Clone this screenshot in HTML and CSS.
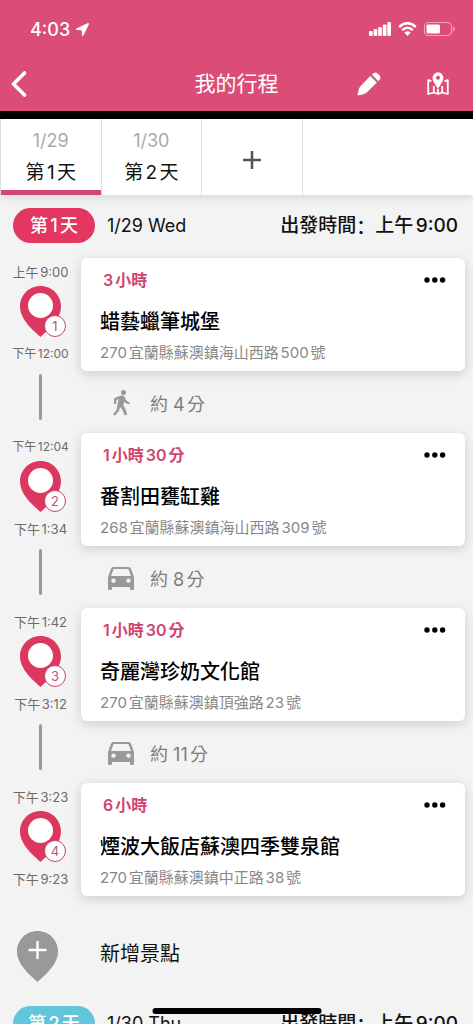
FILE: index.html
```html
<!DOCTYPE html>
<html lang="zh-Hant">
<head>
<meta charset="utf-8">
<meta name="viewport" content="width=device-width, initial-scale=1">
<title>我的行程</title>
<link rel="stylesheet" href="styles.css">
</head>
<body>
<svg class="defs" aria-hidden="true">
  <symbol id="pin" viewBox="0 0 41 51"><path d="M20.500 0C9 0 0 9 0 20.500C0 34 14 45 20.500 51C27 45 41 34 41 20.500C41 9 32 0 20.500 0Z"/></symbol>
  <symbol id="car" viewBox="0 0 26 23"><path fill-rule="evenodd" d="M5.500 0H20.500Q22.300 0 23 1.800L26 10V21.500Q26 23 24.500 23H23.300Q22 23 22 21.500V20H4V21.500Q4 23 2.700 23H1.500Q0 23 0 21.500V10L3 1.800Q3.700 0 5.500 0ZM5.600 2L3 9H23L20.400 2ZM5.500 11.500a2.200 2.200 0 1 0 .01 0ZM20.500 11.500a2.200 2.200 0 1 0 .01 0Z"/></symbol>
  <symbol id="walk" viewBox="0 0 17 26"><circle cx="10.500" cy="2.500" r="2.500"/><path d="M5 6.500L8.800 5.600Q10.800 5.300 11.500 6.900L12.700 9.500Q14 11.700 16.500 12.200V14.300Q13 14 11.200 11.800L10.400 15.200L12.200 18.500L14.200 24.500L11.800 25.500L9.300 19.500L7 17L6 21L1.800 25.800L0 24.200L3.600 19.800L5.600 9L3.300 10.200V14H1V8.600Z"/></symbol>
  <symbol id="dots" viewBox="0 0 22 6"><circle cx="3" cy="3" r="2.700"/><circle cx="10.800" cy="3" r="2.700"/><circle cx="18.600" cy="3" r="2.700"/></symbol>
</svg>
<div class="app">
  <header class="top">
    <div class="status">
      <span class="clock">4:03</span>
      <svg class="locate" viewBox="0 0 13 13"><path d="M12 0L.4 5.400Q-.5 6.600 .7 7L5.700 7.300L6.100 12.300Q6.600 13.400 7.500 12.500L13 1Q13 0 12 0Z"/></svg>
      <svg class="signal" viewBox="0 0 22 14"><rect x="0" y="9" width="3.700" height="5" rx="1"/><rect x="4.600" y="7" width="3.700" height="7" rx="1"/><rect x="9.200" y="5" width="3.700" height="9" rx="1"/><rect x="13.800" y="2.500" width="3.700" height="11.500" rx="1"/><rect x="18.300" y="0" width="3.700" height="14" rx="1"/></svg>
      <svg class="wifi" viewBox="0 0 19 14"><path class="arc" d="M1.200 5Q9.500 -2.500 17.800 5M4.200 8.200Q9.500 3.500 14.800 8.200"/><path d="M6.300 10.500Q9.500 7.800 12.700 10.500L9.500 14Z"/></svg>
      <svg class="battery" viewBox="0 0 31 14"><rect class="shell" x=".5" y=".5" width="27" height="13" rx="3.500"/><rect x="2.500" y="2.500" width="13.500" height="9" rx="1.500"/><path class="tip" d="M29 4.500Q31 5.500 31 7Q31 8.500 29 9.500Z"/></svg>
    </div>
    <nav class="bar">
      <button class="icon-btn back" aria-label="返回"><svg viewBox="0 0 16 26"><path d="M13.500 2L2.500 13L13.500 24"/></svg></button>
      <h1>我的行程</h1>
      <button class="icon-btn" aria-label="編輯"><svg class="pencil" viewBox="0 0 24 24"><path d="M13.300 4L19.900 10.600L9.500 20.800Q6.500 23 .6 23.600Q.9 17.500 3.400 14.200ZM14.800 2.600L16.500 1.200Q18.500 -.3 20.500 1.400L22.600 3.500Q24.200 5.500 22.700 7.600L21.400 9.200Z"/></svg></button>
      <button class="icon-btn" aria-label="地圖"><svg class="map" viewBox="0 0 22 24"><path class="fold" d="M4.500 9L1.200 8.200V22L7 20.500L11 22L15 20.500L20.800 22V8.200L17.500 9M6.800 14V20.500M15.200 14V20.500M11 17V22"/><path fill-rule="evenodd" d="M11 .3a5.400 5.400 0 0 1 5.400 5.400C16.400 9.500 13 13 11 17C9 13 5.600 9.500 5.600 5.700A5.400 5.400 0 0 1 11 .3ZM11 3.700a2 2 0 1 0 .01 0Z"/></svg></button>
    </nav>
  </header>

  <div class="tabs">
    <button class="tab active"><span class="date">1/29</span><span>第1天</span></button>
    <button class="tab"><span class="date">1/30</span><span>第2天</span></button>
    <button class="tab" aria-label="新增天數"><svg class="plus" viewBox="0 0 18 18"><path d="M9 0V18M0 9H18"/></svg></button>
  </div>

  <main class="plan">
    <div class="day"><span class="pill">第1天</span><span class="day-date">1/29 Wed</span><span class="depart">出發時間<span class="colon" lang="zh-Hans">：</span><b>上午9:00</b></span></div>

    <section class="stop">
      <div class="rail">
        <time>上午9:00</time>
        <div class="marker"><svg><use href="#pin"/></svg><span class="num">1</span></div>
        <time class="long">下午12:00</time>
        <i class="line"></i>
      </div>
      <div class="body">
        <article class="card">
          <div class="head"><span>3小時</span><button class="more" aria-label="更多"><svg><use href="#dots"/></svg></button></div>
          <h2>蜡藝蠟筆城堡</h2>
          <p>270宜蘭縣蘇澳鎮海山西路500號</p>
        </article>
        <div class="leg"><svg class="walk"><use href="#walk"/></svg><span>約 4分</span></div>
      </div>
    </section>

    <section class="stop">
      <div class="rail">
        <time class="long">下午12:04</time>
        <div class="marker"><svg><use href="#pin"/></svg><span class="num">2</span></div>
        <time>下午1:34</time>
        <i class="line"></i>
      </div>
      <div class="body">
        <article class="card">
          <div class="head"><span>1小時30分</span><button class="more" aria-label="更多"><svg><use href="#dots"/></svg></button></div>
          <h2>番割田甕缸雞</h2>
          <p>268宜蘭縣蘇澳鎮海山西路309號</p>
        </article>
        <div class="leg"><svg class="car"><use href="#car"/></svg><span>約 8分</span></div>
      </div>
    </section>

    <section class="stop">
      <div class="rail">
        <time>下午1:42</time>
        <div class="marker"><svg><use href="#pin"/></svg><span class="num">3</span></div>
        <time>下午3:12</time>
        <i class="line"></i>
      </div>
      <div class="body">
        <article class="card">
          <div class="head"><span>1小時30分</span><button class="more" aria-label="更多"><svg><use href="#dots"/></svg></button></div>
          <h2>奇麗灣珍奶文化館</h2>
          <p>270宜蘭縣蘇澳鎮頂強路23號</p>
        </article>
        <div class="leg"><svg class="car"><use href="#car"/></svg><span>約 11分</span></div>
      </div>
    </section>

    <section class="stop">
      <div class="rail">
        <time>下午3:23</time>
        <div class="marker"><svg><use href="#pin"/></svg><span class="num">4</span></div>
        <time>下午9:23</time>
      </div>
      <div class="body">
        <article class="card">
          <div class="head"><span>6小時</span><button class="more" aria-label="更多"><svg><use href="#dots"/></svg></button></div>
          <h2>煙波大飯店蘇澳四季雙泉館</h2>
          <p>270宜蘭縣蘇澳鎮中正路38號</p>
        </article>
      </div>
    </section>

    <button class="add"><svg viewBox="0 0 41 51"><use href="#pin"/><path class="cross" d="M20.500 10V28M11.500 19H29.500"/></svg><span>新增景點</span></button>

    <div class="day"><span class="pill second">第2天</span><span class="day-date">1/30 Thu</span><span class="depart">出發時間<span class="colon" lang="zh-Hans">：</span><b>上午9:00</b></span></div>
  </main>
  <div class="home"></div>
</div>
</body>
</html>
```
FILE: styles.css
```css
* { box-sizing: border-box; }
body {
  margin: 0;
  font-family: Inter, "Noto Sans CJK TC", sans-serif;
  background: #f3f3f3;
  color: #111;
  text-autospace: normal;
}
button {
  font: inherit;
  color: inherit;
  background: none;
  border: 0;
  padding: 0;
}
h1, h2, p { margin: 0; }
svg { display: block; fill: currentColor; }
.defs { position: absolute; width: 0; height: 0; }
.app { height: 100vh; display: flex; flex-direction: column; overflow: hidden; }

.top { flex: none; background: #db4d77; color: #fff; border-bottom: 8px solid #000; }
.status { display: flex; align-items: center; height: 56px; padding: 2px 18px 0 30px; }
.clock { font-size: 18px; font-weight: 500; }
.locate { width: 13px; height: 13px; margin-left: 6px; }
.signal { width: 22px; height: 14px; margin-left: auto; }
.wifi { width: 19px; height: 14px; margin: 0 7px; }
.arc { fill: none; stroke: currentColor; stroke-width: 2.400; }
.battery { width: 31px; height: 14px; }
.shell { fill: none; stroke: currentColor; opacity: .5; }
.tip { opacity: .5; }
.bar {
  display: grid;
  grid-template-columns: 138px 1fr 68px 70px;
  align-items: center;
  height: 55px;
}
.bar h1 { font-size: 21px; line-height: 30px; font-weight: 400; text-align: center; }
.icon-btn { display: flex; justify-content: center; }
.back { justify-content: flex-start; padding-left: 11px; }
.back svg { width: 16px; height: 26px; fill: none; stroke: currentColor; stroke-width: 3.600; stroke-linecap: round; stroke-linejoin: round; }
.pencil { width: 24px; height: 24px; }
.map { width: 22px; height: 24px; }
.fold { fill: none; stroke: currentColor; stroke-width: 1.800; stroke-linejoin: round; }

.tabs {
  flex: none;
  display: flex;
  height: 76px;
  background: #fff;
  border-left: 1px solid #ddd;
  box-shadow: 0 2px 10px rgba(0, 0, 0, .12);
  z-index: 1;
}
.tab {
  display: flex;
  flex-direction: column;
  align-items: center;
  justify-content: center;
  flex: 0 0 21.300%;
  font-size: 19px;
  line-height: 32px;
  border-right: 1px solid #ddd;
}
.tab.active { box-shadow: inset 0 -5px #cf4871; }
.date { font-size: 18px; color: #aaa; }
.plus { width: 18px; height: 18px; margin-top: 5px; fill: none; stroke: #555; stroke-width: 2.600; }

.plan { flex: 1; min-height: 0; overflow: hidden; padding-top: 13px; }
.day { display: flex; align-items: center; height: 35px; padding: 0 15px 0 13px; font-size: 18px; }
.pill {
  width: 82px;
  height: 35px;
  border-radius: 18px;
  background: #e33660;
  color: #fff;
  font-weight: 500;
  line-height: 35px;
  text-align: center;
}
.second { background: #62c6da; }
.day-date { margin-left: 12px; }
.depart { margin-left: auto; font-size: 19px; line-height: 32px; font-weight: 500; display: flex; }
.depart b { font-weight: 500; }
.colon { font-family: "Noto Sans CJK SC", sans-serif; }

.stop { display: flex; padding-right: 8px; }
.day + .stop { margin-top: 15px; }
.rail { flex: 0 0 81px; display: flex; flex-direction: column; align-items: center; padding-top: 4px; }
.rail time { font-size: 13px; line-height: 20px; color: #6b6b6b; white-space: nowrap; }
.rail .long { font-size: 12px; }
.marker { position: relative; width: 41px; height: 51px; margin: 4px 0 7px; color: #dc385f; }
.marker svg { width: 41px; height: 51px; }
.marker::before {
  content: "";
  position: absolute;
  left: 8px;
  top: 7px;
  width: 25px;
  height: 25px;
  border-radius: 50%;
  background: #fff;
}
.num {
  position: absolute;
  left: 24px;
  top: 29px;
  width: 22px;
  height: 22px;
  border: 1px solid #c64770;
  border-radius: 50%;
  background: #fff;
  color: #b9557a;
  font-size: 13px;
  line-height: 20px;
  text-align: center;
}
.line { width: 3px; height: 46px; margin-top: 10px; background: #999; border-radius: 2px; }
.body { flex: 1; min-width: 0; }
.card {
  height: 113px;
  padding: 10px 19px;
  background: #fff;
  border-radius: 6px;
  box-shadow: 0 3px 12px rgba(0, 0, 0, .16);
}
.head { display: flex; align-items: center; justify-content: space-between; padding-left: 3px; font-size: 16px; line-height: 24px; font-weight: 600; color: #cf4570; }
.more { color: #000; }
.more svg { width: 22px; height: 6px; }
.card h2 { margin-top: 14px; font-size: 20px; line-height: 32px; font-weight: 500; color: #000; white-space: nowrap; }
.card p { margin-top: 3px; font-size: 15px; line-height: 24px; color: #888; white-space: nowrap; }
.leg {
  display: grid;
  grid-template-columns: 26px 1fr;
  column-gap: 16px;
  align-items: center;
  height: 62px;
  padding: 2px 0 0 27px;
  font-size: 18px;
  color: #7d7d7d;
}
.leg svg { justify-self: center; color: #999; }
.car { width: 26px; height: 23px; }
.walk { width: 17px; height: 26px; }

.add { display: flex; align-items: center; gap: 42px; margin-top: 35px; padding-left: 17px; font-size: 20px; line-height: 42px; }
.add svg { width: 41px; height: 51px; color: #999; }
.add .cross { fill: none; stroke: #fff; stroke-width: 2.400; }
.add span { padding-bottom: 6px; }
.add + .day { margin-top: 24px; }
.home { position: fixed; left: 50%; bottom: 10px; width: 169px; height: 6px; border-radius: 3px; background: #000; transform: translateX(-50%); z-index: 2; }
```
